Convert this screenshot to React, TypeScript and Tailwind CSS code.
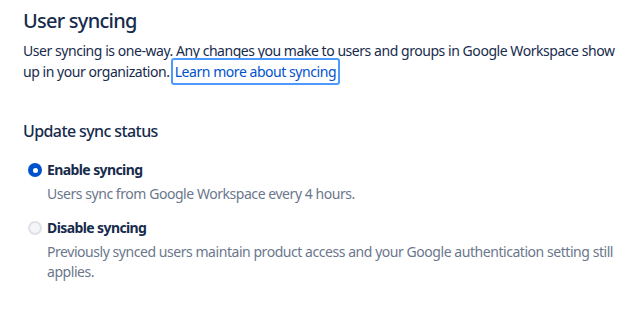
import { useState } from 'react'

type Option = {
  id: string
  label: string
  description: string
}

const options: Option[] = [
  {
    id: 'enable',
    label: 'Enable syncing',
    description: 'Users sync from Google Workspace every 4 hours.',
  },
  {
    id: 'disable',
    label: 'Disable syncing',
    description:
      'Previously synced users maintain product access and your Google authentication setting still applies.',
  },
]

function Radio({ checked }: { checked: boolean }) {
  if (checked) {
    return (
      <span className="flex h-[14px] w-[14px] items-center justify-center rounded-full bg-[#0052cc]">
        <span className="h-[5px] w-[5px] rounded-full bg-white" />
      </span>
    )
  }
  return <span className="h-[14px] w-[14px] rounded-full border-2 border-[#dfe1e6] bg-[#f4f5f7]" />
}

export default function App() {
  const [value, setValue] = useState('enable')

  return (
    <div
      className="min-h-screen bg-white pl-[23px] pt-[7px] text-[#172b4d]"
      style={{ fontFamily: '"Noto Sans", "Liberation Sans", sans-serif' }}
    >
      <h1 className="text-[20px] font-medium leading-[28px] tracking-[-0.75px]">User syncing</h1>
      <p className="mt-[5px] w-[600px] text-[14px] leading-[21px] tracking-[-0.45px]">
        User syncing is one-way. Any changes you make to users and groups in Google Workspace show up
        in your organization.{' '}
        <a
          href="#"
          className="rounded-[1px] px-[2px] py-[2px] text-[#0052cc] outline outline-2 outline-[#4c9aff]"
        >
          Learn more about syncing
        </a>
      </p>

      <h2 className="mt-[38px] text-[16px] font-medium leading-[22px] tracking-[-0.6px]">
        Update sync status
      </h2>

      <div className="mt-[18px] flex flex-col gap-[14px]">
        {options.map((opt) => (
          <label key={opt.id} className="flex cursor-pointer flex-col" onClick={() => setValue(opt.id)}>
            <span className="flex items-center gap-[5px] pl-[5px]">
              <Radio checked={value === opt.id} />
              <span className="text-[14px] font-bold leading-[20px] tracking-[-0.6px]">{opt.label}</span>
            </span>
            <span className="mt-[4px] w-[600px] pl-[24px] text-[14px] leading-[20px] tracking-[-0.45px] text-[#6b778c]">
              {opt.description}
            </span>
          </label>
        ))}
      </div>
    </div>
  )
}
